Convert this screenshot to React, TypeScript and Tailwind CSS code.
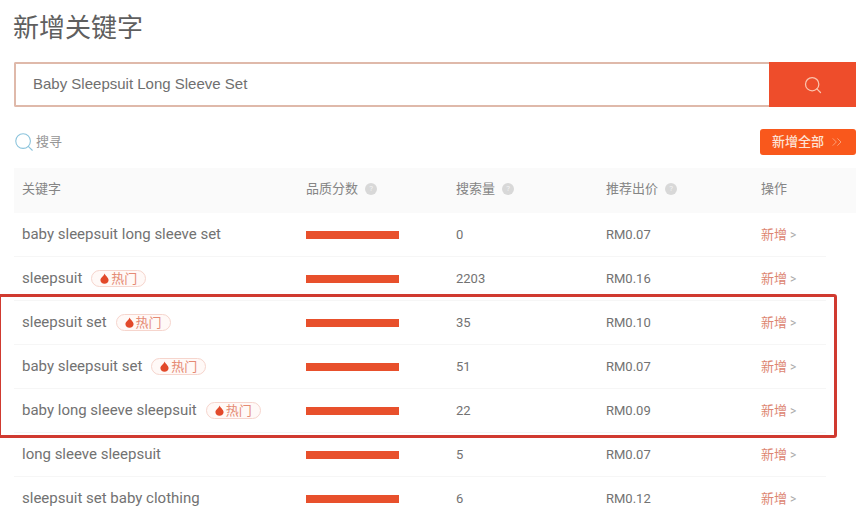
import { ChevronsRight, Search } from 'lucide-react';

const ROWS = [
  { keyword: 'baby sleepsuit long sleeve set', hot: false, volume: '0', price: 'RM0.07' },
  { keyword: 'sleepsuit', hot: true, volume: '2203', price: 'RM0.16' },
  { keyword: 'sleepsuit set', hot: true, volume: '35', price: 'RM0.10' },
  { keyword: 'baby sleepsuit set', hot: true, volume: '51', price: 'RM0.07' },
  { keyword: 'baby long sleeve sleepsuit', hot: true, volume: '22', price: 'RM0.09' },
  { keyword: 'long sleeve sleepsuit', hot: false, volume: '5', price: 'RM0.07' },
  { keyword: 'sleepsuit set baby clothing', hot: false, volume: '6', price: 'RM0.12' },
];

const FONT = "font-['Roboto','Noto_Sans_CJK_SC',sans-serif]";

function HelpDot() {
  return (
    <span className="ml-[7px] flex h-[12px] w-[12px] items-center justify-center rounded-full bg-[#d8d8d8] text-[8px] leading-none text-[#f4f4f4]">
      ?
    </span>
  );
}

function HotBadge() {
  return (
    <span className="ml-[9px] flex h-[17px] w-[55px] items-center justify-center rounded-full border border-[#f6d5cd] bg-[#fff9f7] text-[13px] leading-none text-[#e58a74]">
      <svg width="9" height="11" viewBox="0 0 9 11" className="mr-[2px]">
        <path d="M4.6 0.4C5 2.4 8.6 4.4 8.6 7.1 8.6 9.3 6.8 10.8 4.5 10.8 2.2 10.8 0.4 9.3 0.4 7.1 0.4 4.9 3.6 3.2 4.6 0.4Z" fill="#e2492a" />
      </svg>
      热门
    </span>
  );
}

export default function App() {
  return (
    <div className={`relative h-[514px] w-[864px] overflow-hidden bg-white ${FONT}`}>
      <div className="px-[14px]">
        <h1 className="ml-[-1px] h-[62px] pt-[11px] text-[26px] leading-[34px] font-normal text-[#5f5f5f]">新增关键字</h1>

        <div className="flex h-[45px] w-[842px]">
          <div className="flex flex-1 items-center rounded-l-[2px] border-2 border-r-0 border-[#dfb9aa] pl-[17px] font-['Liberation_Sans',sans-serif] text-[15px] text-[#6f6f6f]">
            Baby Sleepsuit Long Sleeve Set
          </div>
          <div className="flex w-[87px] items-center justify-center bg-[#ee4d2b]">
            <Search size={20} strokeWidth={1.5} className="text-[#fbc4ae]" />
          </div>
        </div>

        <div className="flex h-[61px] w-[842px] items-center justify-between pt-[9px]">
          <div className="flex items-center">
            <Search size={22} strokeWidth={1.2} className="ml-[-1px] text-[#8cc4dc]" />
            <span className="ml-[1px] text-[13px] text-[#969696]">搜寻</span>
          </div>
          <button className="flex h-[26px] w-[96px] items-center justify-center rounded-[3px] bg-[#f9581c] pl-[1px] text-[13px] font-medium text-[#fde3d6]">
            新增全部
            <ChevronsRight size={16} strokeWidth={1.2} className="ml-[5px] text-[#fbb08c]" />
          </button>
        </div>

        <div className="flex h-[45px] w-[842px] items-center bg-[#fafafa] pb-[3px] text-[13px] text-[#858585]">
          <div className="w-[292px] pl-[8px]">关键字</div>
          <div className="flex w-[150px] items-center">品质分数<HelpDot /></div>
          <div className="flex w-[150px] items-center">搜索量<HelpDot /></div>
          <div className="flex w-[155px] items-center">推荐出价<HelpDot /></div>
          <div>操作</div>
        </div>

        {ROWS.map((row) => (
          <div key={row.keyword} className="flex h-[44px] w-[812px] items-center border-b border-[#f6f6f6] text-[#727272]">
            <div className="flex w-[292px] items-center pb-[1px] pl-[8px] text-[15px]">
              {row.keyword}
              {row.hot && <HotBadge />}
            </div>
            <div className="w-[150px]">
              <div className="h-[8px] w-[93px] bg-[#e8502c]" />
            </div>
            <div className="w-[150px] text-[13px]">{row.volume}</div>
            <div className="w-[155px] text-[13px]">{row.price}</div>
            <div className="flex items-center text-[13px] text-[#dd8672]">
              新增
              <span className="ml-[3px] text-[12px] text-[#ababab]">&gt;</span>
            </div>
          </div>
        ))}
      </div>

      {/* red highlight drawn over the screenshot */}
      <div className="pointer-events-none absolute top-[294px] left-[-2px] h-[144px] w-[839px] rounded-[3px] border-[3px] border-[#d03a30]" />
    </div>
  );
}
